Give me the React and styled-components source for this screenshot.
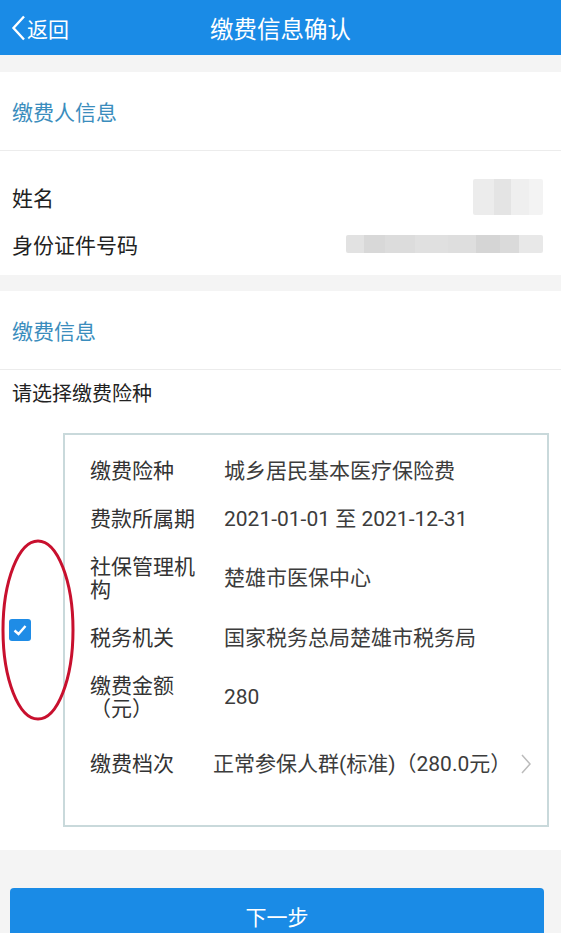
import React from "react";
import styled, { createGlobalStyle } from "styled-components";

const GlobalStyle = createGlobalStyle`
  html, body {
    margin: 0;
    padding: 0;
    background: #f4f4f4;
  }
  body {
    font-family: Roboto, "Noto Sans CJK SC", "Noto Sans", sans-serif;
    color: #222;
  }
`;

const Page = styled.div`
  width: 561px;
  height: 933px;
  overflow: hidden;
  background: #f4f4f4;
`;

const NavBar = styled.header`
  height: 55px;
  background: #1a8be6;
  display: grid;
  grid-template-columns: 120px 1fr 120px;
  align-items: center;
  color: #fff;
  margin-bottom: 17px;
`;

const BackButton = styled.div`
  display: flex;
  align-items: center;
  padding-left: 11px;
  font-size: 21px;
  gap: 1px;
`;

const Title = styled.h1`
  margin: 0;
  text-align: center;
  font-size: 23.5px;
  font-weight: 400;
`;

const Section = styled.section`
  background: #fff;
  margin-bottom: ${({ $gap }) => $gap || 0}px;
`;

const SectionTitle = styled.div`
  height: 78px;
  display: flex;
  align-items: center;
  padding-left: 12px;
  font-size: 21px;
  color: #3b8dbd;
  border-bottom: 1px solid #ececec;
`;

const InfoList = styled.div`
  padding: 22px 0 8px;
`;

const InfoRow = styled.div`
  height: 47px;
  display: flex;
  align-items: center;
  justify-content: space-between;
  padding: 0 18px 0 12px;
  font-size: 21px;
  color: #222;
`;

const Masked = styled.span`
  display: block;
  width: ${({ $w }) => $w}px;
  height: ${({ $h }) => $h}px;
  background: ${({ $dark }) =>
    $dark
      ? "linear-gradient(90deg, #e2e2e2 0 9%, #d8d8d8 9% 20%, #dcdcdc 20% 35%, #e0e0e0 35% 52%, #dedede 52% 66%, #d5d5d5 66% 78%, #dadada 78% 88%, #e8e8e8 88%)"
      : "linear-gradient(90deg, #ececec 0 30%, #e4e4e4 30% 55%, #efefef 55% 80%, #f3f3f3 80%)"};
  border-radius: 2px;
`;

const Prompt = styled.div`
  padding: 12px 12px;
  line-height: 24px;
  font-size: 20px;
  color: #222;
`;

const PickRow = styled.div`
  display: flex;
  align-items: center;
  padding: 15px 12px 23px 0;
`;

const CheckCol = styled.div`
  position: relative;
  width: 63px;
  flex: none;
  display: flex;
  justify-content: flex-start;
  padding-left: 9px;
  box-sizing: border-box;
`;

const CheckBox = styled.span`
  width: 22px;
  height: 22px;
  border-radius: 3px;
  background: #1f8ce6;
  display: flex;
  align-items: center;
  justify-content: center;
`;

const Ellipse = styled.svg`
  position: absolute;
  left: -6px;
  top: 50%;
  transform: translateY(-50%);
  pointer-events: none;
`;

const Card = styled.div`
  flex: 1;
  border: 2px solid #c9d9db;
  padding: 12px 0 37px 25px;
`;

const Field = styled.div`
  display: flex;
  align-items: center;
  padding: ${({ $select }) => ($select ? "19.5px 0 12.5px" : "12.5px 0")};
  font-size: 21px;
  line-height: 23px;
`;

const Label = styled.div`
  width: 106px;
  flex: none;
  color: #333;
`;

const Value = styled.div`
  flex: 1;
  color: #3c3c3c;
  padding-left: ${({ $select }) => ($select ? 17 : 28)}px;
  display: flex;
  align-items: center;
  justify-content: space-between;
  padding-right: 16px;
`;

const Footer = styled.div`
  padding: 38px 17px 0 10px;
`;

const NextButton = styled.button`
  width: 100%;
  height: 60px;
  border: 0;
  border-radius: 4px;
  background: #1a8be6;
  color: #fff;
  font-family: inherit;
  font-size: 21px;
  display: flex;
  align-items: flex-start;
  justify-content: center;
  padding-top: 13px;
`;

const fields = [
  { label: "缴费险种", value: "城乡居民基本医疗保险费" },
  { label: "费款所属期", value: "2021-01-01 至 2021-12-31" },
  { label: "社保管理机构", value: "楚雄市医保中心" },
  { label: "税务机关", value: "国家税务总局楚雄市税务局" },
  { label: "缴费金额（元）", value: "280" },
];

export default function App() {
  return (
    <Page>
      <GlobalStyle />
      <NavBar>
        <BackButton>
          <svg width="15" height="26" viewBox="0 0 15 26">
            <path d="M13 1.5 L2.5 13 L13 24.5" fill="none" stroke="#fff" strokeWidth="2.4" />
          </svg>
          返回
        </BackButton>
        <Title>缴费信息确认</Title>
        <span />
      </NavBar>

      <Section $gap={16}>
        <SectionTitle>缴费人信息</SectionTitle>
        <InfoList>
          <InfoRow>
            姓名
            <Masked $w={70} $h={36} />
          </InfoRow>
          <InfoRow>
            身份证件号码
            <Masked $w={197} $h={18} $dark />
          </InfoRow>
        </InfoList>
      </Section>

      <Section>
        <SectionTitle>缴费信息</SectionTitle>
        <Prompt>请选择缴费险种</Prompt>
        <PickRow>
          <CheckCol>
            <CheckBox>
              <svg width="16" height="16" viewBox="0 0 16 16">
                <path d="M2.5 8.5 L6.5 12 L13.5 4" fill="none" stroke="#fff" strokeWidth="2.4" />
              </svg>
            </CheckBox>
            <Ellipse width="84" height="186" viewBox="0 0 84 186">
              <ellipse cx="44" cy="93" rx="35" ry="89" fill="none" stroke="#c8102e" strokeWidth="3" />
            </Ellipse>
          </CheckCol>
          <Card>
            {fields.map((f) => (
              <Field key={f.label}>
                <Label>{f.label}</Label>
                <Value>{f.value}</Value>
              </Field>
            ))}
            <Field $select>
              <Label>缴费档次</Label>
              <Value $select>
                正常参保人群(标准)（280.0元）
                <svg width="10" height="20" viewBox="0 0 10 20">
                  <path d="M1 1 L9 10 L1 19" fill="none" stroke="#bbb" strokeWidth="1.5" />
                </svg>
              </Value>
            </Field>
          </Card>
        </PickRow>
      </Section>

      <Footer>
        <NextButton>下一步</NextButton>
      </Footer>
    </Page>
  );
}
